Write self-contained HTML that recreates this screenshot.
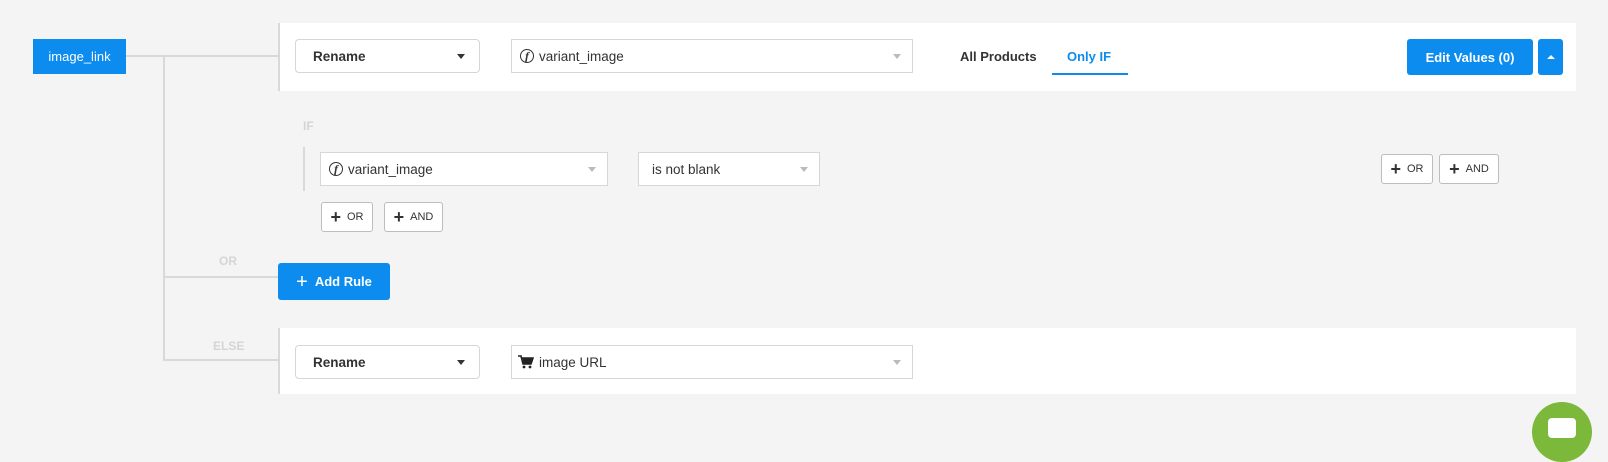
<!DOCTYPE html><html><head><style>
*{box-sizing:border-box;margin:0;padding:0}
body{width:1608px;height:429px;background:#f4f4f4;position:relative;overflow:hidden;font-family:"Liberation Sans",sans-serif}
.a{position:absolute}
.ln{position:absolute;background:#d9d9d9}
.panel{position:absolute;background:#fff;border-left:2px solid #d9d9d9}
.sel{position:absolute;background:#fff;border:1px solid #d6d6d6;font-size:13.5px;color:#333;display:flex;align-items:center}
.car{position:absolute;width:0;height:0;border-left:4px solid transparent;border-right:4px solid transparent;border-top:5px solid #333}
.carl{border-top-color:#bbb}
.btn{position:absolute;background:#fff;border:1px solid #bdbdbd;border-radius:3px;font-size:11px;color:#333;display:flex;align-items:center;justify-content:center;gap:6px}
.btn b{font-size:18px;font-weight:900;line-height:1}
.lbl{position:absolute;font-size:12px;font-weight:bold;color:#d5d5d5}
.f{display:inline-block;width:14px;height:14px;border:1px solid #333;border-radius:50%;font-style:italic;font-family:"Liberation Serif",serif;font-size:12px;line-height:12px;text-align:center;margin:0 5px 0 8px;font-weight:bold}
</style></head><body>
<div class="a" style="left:33px;top:39px;width:93px;height:35px;background:#0b8cee;color:#fff;font-size:13px;display:flex;align-items:center;justify-content:center">image_link</div>
<div class="ln" style="left:126px;top:55px;width:152px;height:2px"></div>
<div class="ln" style="left:163px;top:55px;width:2px;height:306px"></div>
<div class="ln" style="left:163px;top:276px;width:115px;height:2px"></div>
<div class="ln" style="left:163px;top:359px;width:115px;height:2px"></div>

<div class="panel" style="left:278px;top:23px;width:1298px;height:68px"></div>
<div class="sel" style="left:295px;top:39px;width:185px;height:34px;border-radius:4px;font-weight:bold;padding-left:17px">Rename</div>
<div class="car" style="left:457px;top:54px"></div>
<div class="sel" style="left:511px;top:39px;width:402px;height:34px"><span class="f">f</span>variant_image</div>
<div class="car carl" style="left:893px;top:54px"></div>
<div class="a" style="left:960px;top:49px;font-size:13px;font-weight:bold;color:#333">All Products</div>
<div class="a" style="left:1067px;top:49px;font-size:13px;font-weight:bold;color:#0b8cee">Only IF</div>
<div class="a" style="left:1052px;top:73px;width:76px;height:2px;background:#0b8cee"></div>
<div class="a" style="left:1407px;top:39px;width:126px;height:36px;background:#0b8cee;border-radius:3px;color:#fff;font-size:13px;font-weight:bold;display:flex;align-items:center;justify-content:center">Edit Values (0)</div>
<div class="a" style="left:1538px;top:39px;width:25px;height:36px;background:#0b8cee;border-radius:3px"></div>
<div class="a" style="left:1547px;top:55px;width:0;height:0;border-left:4px solid transparent;border-right:4px solid transparent;border-bottom:4px solid #fff"></div>

<div class="lbl" style="left:303px;top:119px">IF</div>
<div class="ln" style="left:303px;top:147px;width:2px;height:44px"></div>
<div class="sel" style="left:320px;top:152px;width:288px;height:34px"><span class="f">f</span>variant_image</div>
<div class="car carl" style="left:588px;top:167px"></div>
<div class="sel" style="left:638px;top:152px;width:182px;height:34px;padding-left:13px">is not blank</div>
<div class="car carl" style="left:800px;top:167px"></div>
<div class="btn" style="left:321px;top:202px;width:52px;height:30px"><b>+</b>OR</div>
<div class="btn" style="left:384px;top:202px;width:59px;height:30px"><b>+</b>AND</div>
<div class="btn" style="left:1381px;top:154px;width:52px;height:30px"><b>+</b>OR</div>
<div class="btn" style="left:1439px;top:154px;width:60px;height:30px"><b>+</b>AND</div>

<div class="lbl" style="left:219px;top:254px">OR</div>
<div class="a" style="left:278px;top:263px;width:112px;height:37px;background:#0b8cee;border-radius:3px;color:#fff;font-size:13px;font-weight:bold;display:flex;align-items:center;justify-content:center;gap:7px"><span style="font-size:20px;font-weight:normal;line-height:1">+</span>Add Rule</div>

<div class="lbl" style="left:213px;top:339px">ELSE</div>
<div class="panel" style="left:278px;top:328px;width:1298px;height:66px"></div>
<div class="sel" style="left:295px;top:345px;width:185px;height:34px;border-radius:4px;font-weight:bold;padding-left:17px">Rename</div>
<div class="car" style="left:457px;top:360px"></div>
<div class="sel" style="left:511px;top:345px;width:402px;height:34px"><svg width="16" height="14" viewBox="0 0 16 14" style="margin:0 5px 0 6px"><path d="M0 1h3l2 8h8l2-6H4" fill="none" stroke="#222" stroke-width="1.6"/><path d="M4.5 3.5h10l-2 5h-7z" fill="#222"/><circle cx="6" cy="12" r="1.4" fill="#222"/><circle cx="12" cy="12" r="1.4" fill="#222"/></svg>image URL</div>
<div class="car carl" style="left:893px;top:360px"></div>

<div class="a" style="left:1532px;top:402px;width:60px;height:60px;border-radius:50%;background:#7cb83a"></div>
<div class="a" style="left:1548px;top:418px;width:28px;height:20px;border-radius:4px;background:#fff"></div>
</body></html>
